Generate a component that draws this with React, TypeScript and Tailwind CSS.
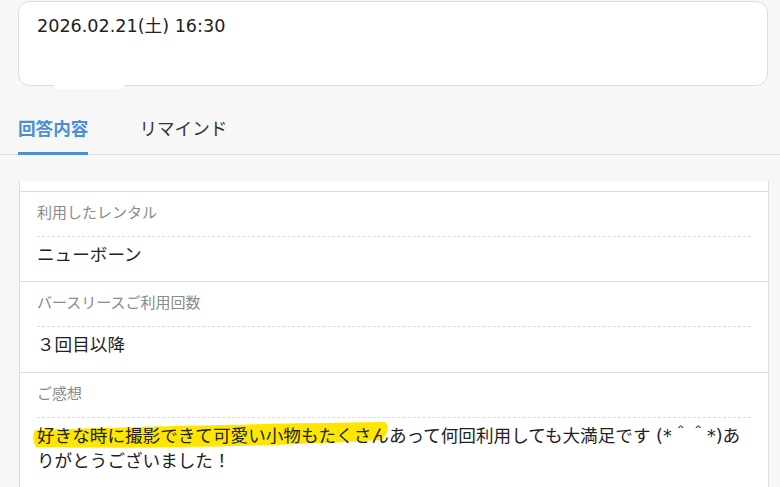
import React from "react";

const font = { fontFamily: '"DejaVu Sans", "Noto Sans CJK JP", sans-serif' };

function Row({ label, children }: { label: string; children: React.ReactNode }) {
  return (
    <div className="border-t border-[#dddddd] px-[17px]">
      <div className="pt-[10px] pb-[12px] leading-[22px] text-[15px] text-[#8a8a8a] border-b border-dashed border-[#dcdcdc]">
        {label}
      </div>
      <div className="pt-[6px] pb-[13px] leading-[25px] text-[17.6px] text-[#222222]">{children}</div>
    </div>
  );
}

export default function App() {
  return (
    <div className="min-h-[487px] w-[780px] bg-[#f7f7f7] overflow-hidden" style={font}>
      <div className="pt-px pl-[18px]">
        <div className="relative w-[750px] h-[85px] bg-white border border-[#dddddd] rounded-[12px] px-[18px] pt-[12px]">
          <div className="text-[17.6px] leading-[25px] text-[#222222]">2026.02.21(土) 16:30</div>
          <div className="absolute left-[35px] bottom-[-4px] w-[70px] h-[6px] rounded-full bg-white" />
        </div>
      </div>

      <div className="flex gap-[51px] pl-[18px] border-b border-[#dddddd]">
        <div className="pt-[31px] pb-[10px] leading-[25px] text-[17.6px] font-bold text-[#4a8fd6] border-b-[3px] border-[#4a8fd6] -mb-px">
          回答内容
        </div>
        <div className="pt-[31px] pb-[10px] leading-[25px] text-[17.6px] text-[#333333]">リマインド</div>
      </div>

      <div className="ml-[19px] mt-[26px] w-[750px] bg-white border-x border-[#dddddd] pt-[10px]">
        <Row label="利用したレンタル">ニューボーン</Row>
        <Row label="バースリースご利用回数">
          <div className="pb-px">３回目以降</div>
        </Row>
        <Row label="ご感想">
          <div className="relative">
            <svg
              className="absolute left-[-7px] top-[-6px] z-0"
              width="370"
              height="36"
              viewBox="0 0 370 36"
            >
              <path
                d="M5 12 C 60 10, 200 6, 355 4 Q 362 10, 352 22 C 250 28, 120 31, 6 29 Q 1 20, 5 12 Z"
                fill="#ffe600"
              />
            </svg>
            <span className="relative z-10">
              好きな時に撮影できて可愛い小物もたくさんあって何回利用しても大満足です (*＾＾*)ありがとうございました！
            </span>
          </div>
        </Row>
      </div>
    </div>
  );
}
